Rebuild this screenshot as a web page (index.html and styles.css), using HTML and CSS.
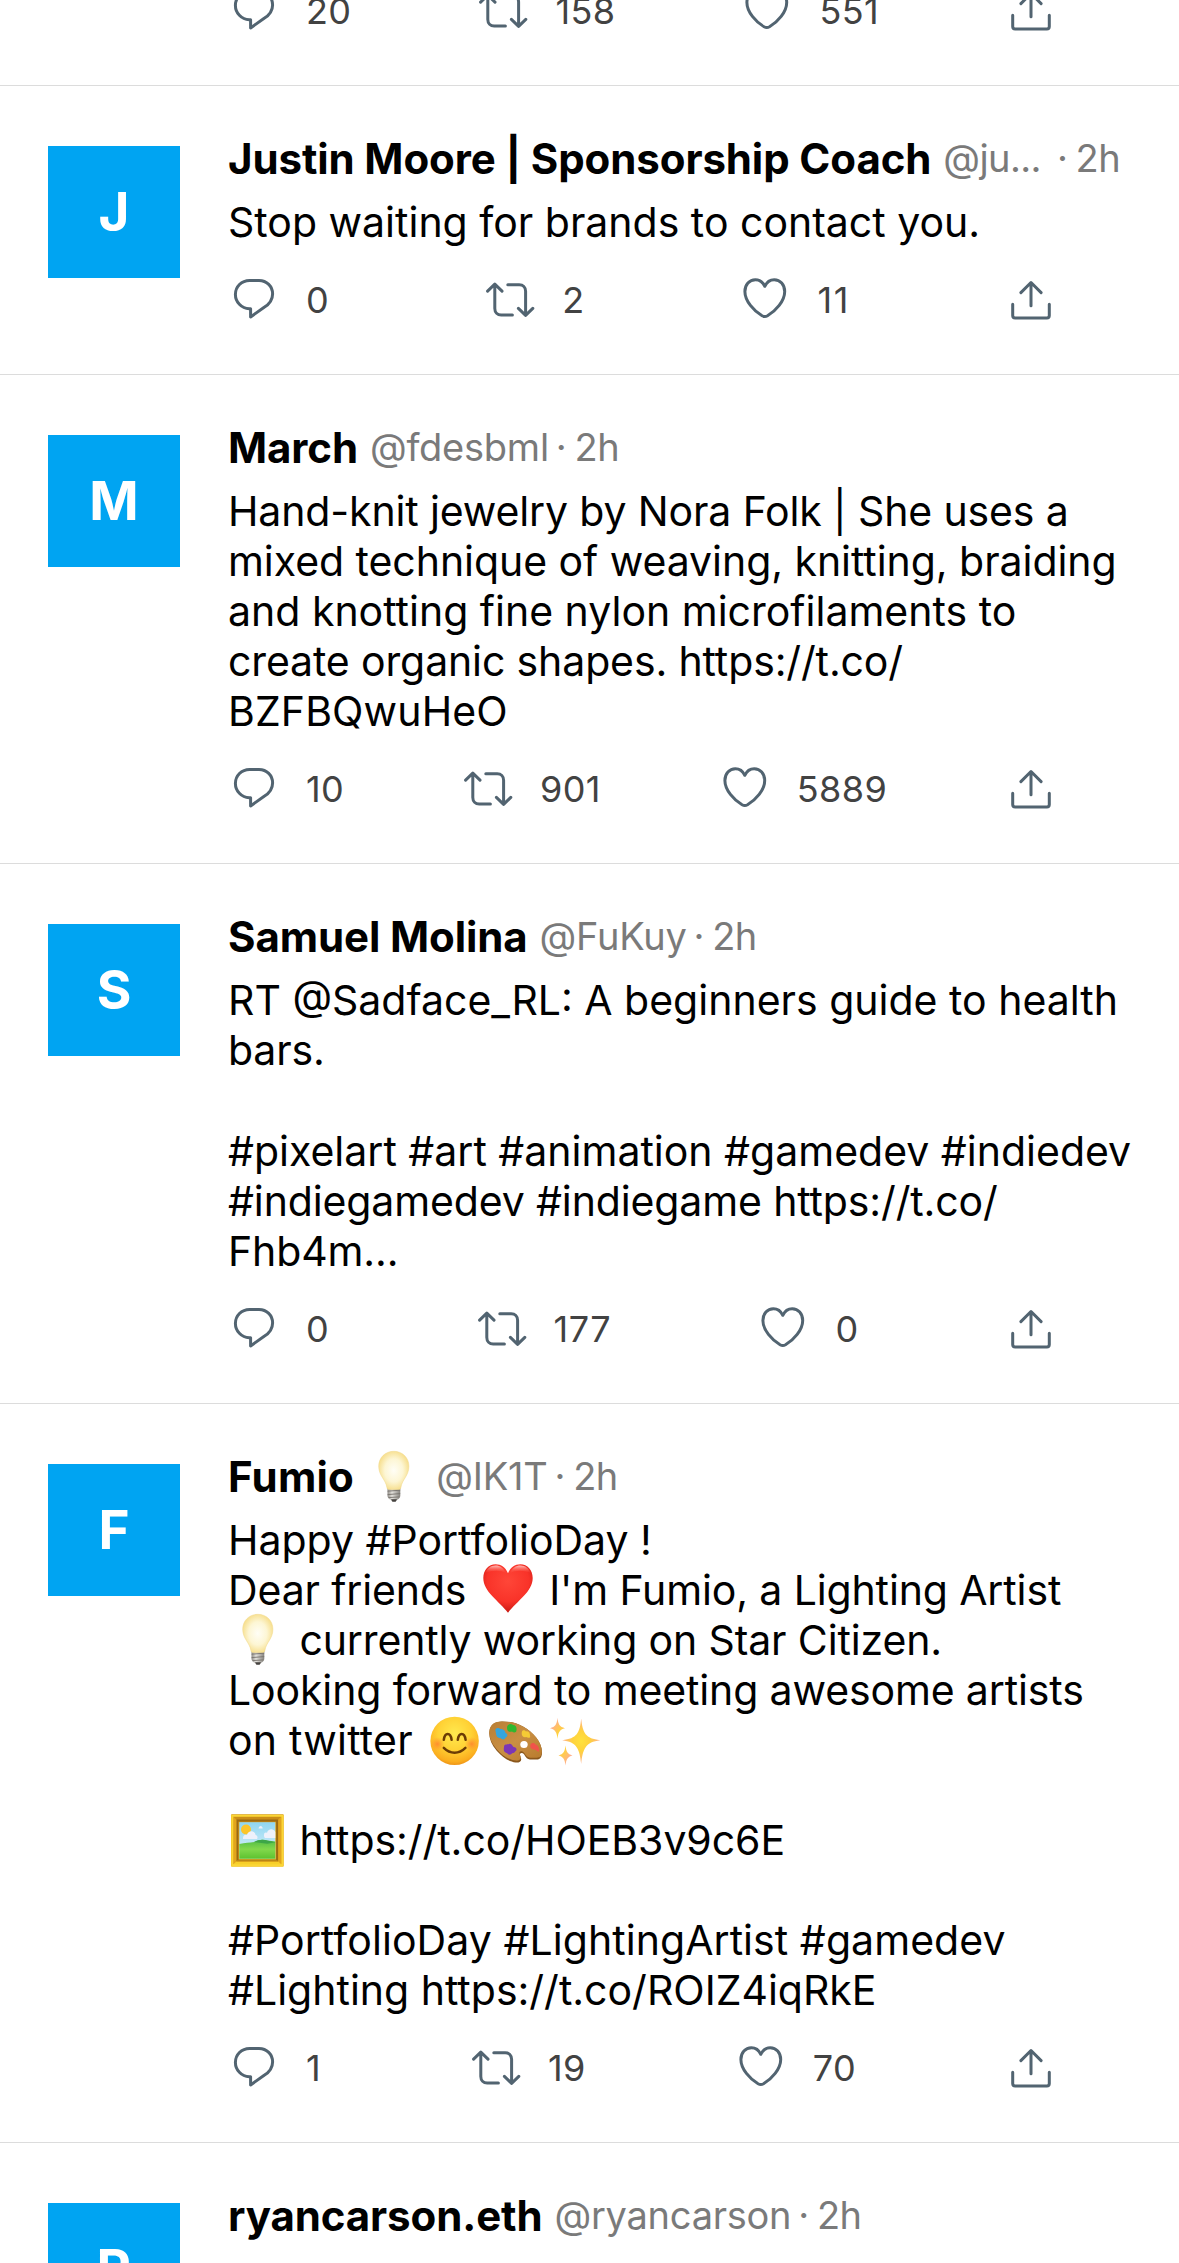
FILE: index.html
```
<!DOCTYPE html>
<html lang="en">
<head>
<meta charset="utf-8">
<title>Timeline</title>
<link rel="stylesheet" href="styles.css">
</head>
<body>
<svg class="sprite" aria-hidden="true">
  <defs>
    <radialGradient id="g-bulb" cx=".5" cy=".5" r=".55"><stop offset="0" stop-color="#fffef6"/><stop offset=".55" stop-color="#fdf6d4"/><stop offset="1" stop-color="#f6dc85"/></radialGradient>
    <linearGradient id="g-base" x1="0" x2="1" y1="0" y2="0"><stop offset="0" stop-color="#8d8a85"/><stop offset=".35" stop-color="#e4e2dd"/><stop offset="1" stop-color="#85827d"/></linearGradient>
    <radialGradient id="g-heart" cx=".5" cy=".35" r=".65"><stop offset="0" stop-color="#ff4638"/><stop offset=".65" stop-color="#f93329"/><stop offset="1" stop-color="#c81912"/></radialGradient>
    <linearGradient id="g-shine" x1="0" x2="0" y1="0" y2="1"><stop offset="0" stop-color="#ffd9d5" stop-opacity=".85"/><stop offset="1" stop-color="#ff5a4c" stop-opacity="0"/></linearGradient>
    <radialGradient id="g-face" cx=".5" cy=".35" r=".68"><stop offset="0" stop-color="#ffe94f"/><stop offset=".5" stop-color="#ffd235"/><stop offset=".85" stop-color="#fbae1f"/><stop offset="1" stop-color="#ea8a12"/></radialGradient>
    <radialGradient id="g-blush"><stop offset="0" stop-color="#ff7a2e" stop-opacity=".75"/><stop offset="1" stop-color="#ff8a2e" stop-opacity="0"/></radialGradient>
    <linearGradient id="g-wood" x1="0" x2="1" y1="0" y2="1"><stop offset="0" stop-color="#b97f35"/><stop offset=".5" stop-color="#c98f43"/><stop offset="1" stop-color="#b87a2c"/></linearGradient>
    <radialGradient id="g-spark"><stop offset="0" stop-color="#ffe23c"/><stop offset=".45" stop-color="#ffd23e"/><stop offset="1" stop-color="#ffb08a"/></radialGradient>
    <linearGradient id="g-sky" x1="0" x2="0" y1="0" y2="1"><stop offset="0" stop-color="#8fd6f2"/><stop offset="1" stop-color="#e4f4fa"/></linearGradient>
    <linearGradient id="g-hill" x1="0" x2="0" y1="0" y2="1"><stop offset="0" stop-color="#4fbb46"/><stop offset=".5" stop-color="#82d84c"/><stop offset="1" stop-color="#5cc22f"/></linearGradient>

    <symbol id="i-reply" viewBox="0 0 52 52"><path d="M21.6 6.4h9.4c7.8 0 13.6 6.2 13.6 13.500 0 5.500-3.100 10-8.400 13.400L22.600 42.900v-8.100h-1.300C13.400 34.400 7.400 27.900 7.400 20.400c0-7.800 6.100-14 14.200-14z"/></symbol>
    <symbol id="i-retweet" viewBox="0 0 52 52"><path d="M3.600 17.200l7.200-7 7.200 7M10.800 10.600v23.900c0 3.800 2.600 6.500 6.400 6.500h11.200M23.800 10.800H35.200c3.800 0 6.400 2.700 6.400 6.500V41.200M34.400 34.400l7.200 7 7.200-7"/></symbol>
    <symbol id="i-like" viewBox="0 0 52 52"><path d="M25.800 12.300C23.800 8 20.300 5.700 16.400 5.700 10.400 5.700 5.900 10.600 5.900 17.500c0 9.600 9 19.500 17.200 24.300 1.800 1 3.600 1 5.400 0C36.700 37 45.700 27.100 45.700 17.500c0-6.900-4.500-11.800-10.500-11.800-3.900 0-7.400 2.300-9.400 6.600z"/></symbol>
    <symbol id="i-share" viewBox="0 0 52 52"><path d="M26 31.800V9M15.900 18.600L26 8.500l10.100 10.100M7.700 30.300v11.200c0 1.500.9 2.400 2.400 2.400h31.800c1.500 0 2.400-.9 2.400-2.400V30.300"/></symbol>

    <symbol id="e-bulb" viewBox="0 0 60 60">
      <path d="M23.500 40h12.800v8.500c0 2.200-1.200 3.400-3 4.200l-1.400 1.600h-4l-1.400-1.600c-1.800-.8-3-2-3-4.200z" fill="url(#g-base)"/>
      <path d="M23.600 44.200l12.600-1M23.600 47.600l12.600-1M24.500 50.600l10.800-.7" stroke="#77736d" stroke-width=".9"/>
      <path d="M27 52.300h6l-1.400 2.400h-3.200z" fill="#45423f"/>
      <path d="M29.800 4.300c8.700 0 15.100 6.400 15.100 14.900 0 9.800-6.700 12.900-8 21.300-.2 1.400-1 2-2.300 2h-9.400c-1.300 0-2.100-.6-2.300-2-1.300-8.400-8.200-11.500-8.200-21.300 0-8.500 6.400-14.900 15.100-14.900z" fill="url(#g-bulb)" stroke="#f1d98c" stroke-width=".5"/>
    </symbol>
    <symbol id="e-heart" viewBox="0 0 60 60">
      <path d="M30 13.300C27.600 7.200 23 4.200 17.700 4.200 10.400 4.200 5.300 10.200 5.300 18c0 13.800 15.600 22.700 24.700 34.800C39.100 40.700 54.700 31.800 54.700 18c0-7.800-5.100-13.800-12.400-13.800-5.300 0-9.900 3-12.300 9.100z" fill="url(#g-heart)"/>
      <path d="M7.500 13c1.700-4.900 5.500-7.600 10-7.600 4.600 0 8.400 2.600 10.700 7.800-6-3.200-13-3.300-20.700-.2zM52.500 13c-1.700-4.900-5.500-7.600-10-7.600-4.600 0-8.400 2.600-10.700 7.800 6-3.200 13-3.300 20.700-.2z" fill="url(#g-shine)"/>
    </symbol>
    <symbol id="e-smile" viewBox="0 0 60 60">
      <circle cx="29.600" cy="29.900" r="24.200" fill="url(#g-face)"/>
      <circle cx="12.500" cy="33" r="7" fill="url(#g-blush)"/><circle cx="46.700" cy="33" r="7" fill="url(#g-blush)"/>
      <path d="M18.800 28.800c.5-3.900 1.900-5.800 3.900-5.800s3.400 1.900 3.900 5.800M32.800 28.800c.5-3.900 1.900-5.800 3.900-5.800s3.400 1.900 3.900 5.800" fill="none" stroke="#6b3c05" stroke-width="2.500" stroke-linecap="round"/>
      <path d="M18.800 36.900c6.400 6.400 15.200 6.400 21.600 0" fill="none" stroke="#6b3c05" stroke-width="2.500" stroke-linecap="round"/>
    </symbol>
    <symbol id="e-palette" viewBox="0 0 60 60">
      <path d="M4.300 21.500C5 14 9.500 10.500 17 10.500c8 0 14.500 1.500 21 5C48 21 57 31 57 41.500c0 5-2 7.200-5.500 7-3.500-.2-5.500.6-8.700-.8-2.800-1.200-3.300-6-6.300-5.700-2.500.3-1.300 3-.5 5.200 1 3-1.500 4.700-5.500 4.300C24 50.800 17 46 11.500 39.500 6.500 33.500 4 27 4.300 21.500z" fill="#8a571c"/>
      <path fill-rule="evenodd" d="M4.300 20.500C5 13.300 9.500 10.500 17 10.500c8 0 14.500 1.500 21 5C48 21 56.800 30.500 56.800 40.500c0 4.500-2 6.400-5.500 6.200-3.500-.2-5.500.4-8.500-.8-2.800-1.200-3.600-5.900-6.600-5.600-2.700.3-1.500 3-.7 5 .8 2.700-1 4.700-5 4.300C24 49 17 44.500 11.500 38 6.500 32 4 26 4.300 20.500z" fill="url(#g-wood)"/>
      <ellipse cx="39" cy="33.500" rx="3.700" ry="3.500" fill="#fff"/>
      <path d="M10.500 20c-1-3 3-4 5-2 3 0 5 2 5 4 3 1 2 4 0 4.500-1 3-4 2-5 .5-4 0-4-2-5-7z" fill="#35a5dd"/>
      <path d="M22 17c0-4 4-5 6-3 3 0 4 3 3.500 5 0 3-3 3-4.500 1.500-3 1-5-.5-5-3.500z" fill="#2fb82f"/>
      <path d="M37 20.500c1-2 3-1 4 0 3-1 4 2 4 4 1 3-2 2.500-4 1.500-3 1-5-2-4-5.500z" fill="#f5cb35"/>
      <path d="M45.500 33.500c1-2 4-2 5 0 3 1 4 4 3.500 7-2 .5-3-2-4.500-2-3 0-5-2-4-5z" fill="#f0534a"/>
      <path d="M19 36c0-3 3-2.500 5-3 3-1 3 2 4.500 3 3 0 4 3 2 4-1 2.500-3 1.500-4 3-3 2-4-1-5-1-3-1-3-3-2.500-6z" fill="#7c36b5"/>
    </symbol>
    <symbol id="e-sparkles" viewBox="0 0 60 60">
      <path d="M36.200 7.500c1.400 14.500 4.300 20 19 21.700C40.500 31 37.600 38 36.200 52.900 34.800 38 31.900 31 17.200 29.200 31.900 27.500 34.800 22 36.200 7.500z" fill="url(#g-spark)"/>
      <path d="M12.500 6.800c.7 6.500 2 9.100 7.500 10.400-5.500 1.300-6.800 4.200-7.500 10.700C11.800 21.400 10.500 18.500 5 17.200c5.500-1.300 6.800-3.900 7.500-10.400zM20.500 34.600c.7 6 2 8.600 7 9.900-5 1.300-6.300 4-7 10-.7-6-2-8.700-7-10 5-1.300 6.300-3.900 7-9.900z" fill="url(#g-spark)"/>
    </symbol>
    <symbol id="e-frame" viewBox="0 0 60 60">
      <rect x="3" y="3.500" width="52.700" height="52" rx="1" fill="#e2a51c"/>
      <path d="M3 55.500l8.300-7.700h36l8.400 7.700z" fill="#f7cf2a"/><path d="M3 3.500h52.700l-8.400 7.700h-36z" fill="#c98d18"/>
      <path d="M4.200 4.700h50.300v49.600H4.200z" fill="none" stroke="#fbd636" stroke-width="2"/>
      <path d="M9.500 9.500h39.600v40H9.500z" fill="none" stroke="#9b6a12" stroke-width="2"/>
      <path d="M9 50.200h40.600" stroke="#d9a01b" stroke-width="1.500"/>
      <rect x="11.300" y="11.200" width="36" height="36.600" fill="url(#g-sky)"/>
      <circle cx="18" cy="18.500" r="5" fill="#fbc52b"/>
      <path d="M15 27c0-3 2.500-4 4-3 1-5 8-5 8.500 0 2 .5 2.500 2.500 1.500 4H15zM36 24c0-2.500 2-3 3-2 1-5 7-4.500 8.300-1v6H37c-1-.8-1-2-1-3zM30.500 17.500c1-3.500 4-3 4.200 0z" fill="#eef1fb"/>
      <path d="M11.300 33c6-1.500 10-1 15-2 5-2.800 9-2.800 13-1.500l8 1v17.300h-36z" fill="url(#g-hill)"/>
      <path d="M26 31c5-3 10-2.800 14-1.200l7.300 1.500-8 1.500z" fill="#3da648"/>
    </symbol>
  </defs>
</svg>

<main class="feed">
  <article class="tweet tweet--top">
    <div class="main">
      <footer class="actions">
        <span class="action"><svg class="icon"><use href="#i-reply"/></svg>20</span>
        <span class="action"><svg class="icon"><use href="#i-retweet"/></svg>158</span>
        <span class="action"><svg class="icon"><use href="#i-like"/></svg>551</span>
        <span class="action"><svg class="icon"><use href="#i-share"/></svg></span>
      </footer>
    </div>
  </article>

  <article class="tweet">
    <div class="avatar">J</div>
    <div class="main">
      <header class="head"><b class="name">Justin Moore | Sponsorship Coach</b><span class="handle handle--cut">@ju...</span><span class="time">· 2h</span></header>
      <p class="text"><span>Stop waiting for brands to contact you.</span></p>
      <footer class="actions">
        <span class="action"><svg class="icon"><use href="#i-reply"/></svg>0</span>
        <span class="action"><svg class="icon"><use href="#i-retweet"/></svg>2</span>
        <span class="action action--ones"><svg class="icon"><use href="#i-like"/></svg>11</span>
        <span class="action"><svg class="icon"><use href="#i-share"/></svg></span>
      </footer>
    </div>
  </article>

  <article class="tweet">
    <div class="avatar">M</div>
    <div class="main">
      <header class="head"><b class="name">March</b><span class="handle">@fdesbml</span><span class="time">· 2h</span></header>
      <p class="text">
        <span class="tight">Hand-knit jewelry by Nora Folk | She uses a</span>
        <span class="snug">mixed technique of weaving, knitting, braiding</span>
        <span>and knotting fine nylon microfilaments to</span>
        <span class="tight">create organic shapes. https://t.co/</span>
        <span class="loose">BZFBQwuHeO</span>
      </p>
      <footer class="actions">
        <span class="action"><svg class="icon"><use href="#i-reply"/></svg>10</span>
        <span class="action"><svg class="icon"><use href="#i-retweet"/></svg>901</span>
        <span class="action"><svg class="icon"><use href="#i-like"/></svg>5889</span>
        <span class="action"><svg class="icon"><use href="#i-share"/></svg></span>
      </footer>
    </div>
  </article>

  <article class="tweet">
    <div class="avatar">S</div>
    <div class="main">
      <header class="head"><b class="name">Samuel Molina</b><span class="handle">@FuKuy</span><span class="time">· 2h</span></header>
      <p class="text">
        <span>RT @Sadface_RL: A beginners guide to health</span>
        <span class="tight">bars.</span>
        <span>&nbsp;</span>
        <span>#pixelart #art #animation #gamedev #indiedev</span>
        <span class="tight">#indiegamedev #indiegame https://t.co/</span>
        <span class="tight">Fhb4m...</span>
      </p>
      <footer class="actions">
        <span class="action"><svg class="icon"><use href="#i-reply"/></svg>0</span>
        <span class="action"><svg class="icon"><use href="#i-retweet"/></svg>177</span>
        <span class="action"><svg class="icon"><use href="#i-like"/></svg>0</span>
        <span class="action"><svg class="icon"><use href="#i-share"/></svg></span>
      </footer>
    </div>
  </article>

  <article class="tweet">
    <div class="avatar">F</div>
    <div class="main">
      <header class="head"><b class="name name--emoji">Fumio <svg class="emoji"><use href="#e-bulb"/></svg></b><span class="handle">@IK1T</span><span class="time">· 2h</span></header>
      <p class="text">
        <span>Happy #PortfolioDay !</span>
        <span class="tight">Dear friends <svg class="emoji"><use href="#e-heart"/></svg> I'm Fumio, a Lighting Artist</span>
        <span class="tight"><svg class="emoji"><use href="#e-bulb"/></svg> currently working on Star Citizen.</span>
        <span class="tight">Looking forward to meeting awesome artists</span>
        <span class="wide">on twitter <svg class="emoji"><use href="#e-smile"/></svg><svg class="emoji"><use href="#e-palette"/></svg><svg class="emoji"><use href="#e-sparkles"/></svg></span>
        <span>&nbsp;</span>
        <span class="snug"><svg class="emoji"><use href="#e-frame"/></svg> https://t.co/HOEB3v9c6E</span>
        <span>&nbsp;</span>
        <span class="even">#PortfolioDay #LightingArtist #gamedev</span>
        <span>#Lighting https://t.co/ROIZ4iqRkE</span>
      </p>
      <footer class="actions">
        <span class="action"><svg class="icon"><use href="#i-reply"/></svg>1</span>
        <span class="action"><svg class="icon"><use href="#i-retweet"/></svg>19</span>
        <span class="action"><svg class="icon"><use href="#i-like"/></svg>70</span>
        <span class="action"><svg class="icon"><use href="#i-share"/></svg></span>
      </footer>
    </div>
  </article>

  <article class="tweet">
    <div class="avatar">R</div>
    <div class="main">
      <header class="head"><b class="name">ryancarson.eth</b><span class="handle">@ryancarson</span><span class="time">· 2h</span></header>
    </div>
  </article>
</main>
</body>
</html>
```
FILE: styles.css
```
* { box-sizing: border-box; }

body {
  margin: 0;
  height: 2263px;
  overflow: hidden;
  background: #fff;
  color: #000;
  font-family: Inter, "Liberation Sans", sans-serif;
}

.sprite { display: block; width: 0; height: 0; }

.feed { height: 2263px; overflow: hidden; }

.tweet {
  display: flex;
  gap: 48px;
  padding: 48px;
  border-bottom: 1px solid #dcdcdc;
}

.tweet--top {
  height: 86px;
  padding-top: 0;
  align-items: flex-end;
  justify-content: flex-end;
}

.tweet--top .main { flex: 0 0 903px; }

.avatar {
  display: flex;
  flex: 0 0 132px;
  align-items: center;
  justify-content: center;
  height: 132px;
  margin-top: 12px;
  background: #00a4f2;
  color: #fff;
  font-size: 53px;
  font-weight: 650;
}

.main { flex: 1; min-width: 0; }

.head {
  display: flex;
  align-items: baseline;
  height: 50px;
  line-height: 50px;
  white-space: nowrap;
}

.name {
  font-size: 42px;
  font-weight: 700;
  letter-spacing: -0.1px;
}

.name--emoji { letter-spacing: 0.25px; }

.handle,
.time {
  position: relative;
  top: -2px;
  color: #7a7a7a;
  font-size: 38px;
}

.handle { margin-left: 12px; letter-spacing: -0.25px; }
.handle--cut { margin-right: 9px; letter-spacing: -0.6px; }
.time { margin-left: 7px; letter-spacing: -0.5px; word-spacing: -2px; }

.text {
  margin: 13px 0 27px;
  font-size: 41px;
  line-height: 50.06px;
  white-space: nowrap;
}

.text > span { display: block; }
.tight { letter-spacing: -0.13px; }
.snug { letter-spacing: -0.05px; }
.even { letter-spacing: 0.06px; }
.loose { letter-spacing: 0.12px; }
.wide { letter-spacing: 0.22px; }

.emoji {
  width: 60px;
  height: 60px;
  margin: -10px 0;
  vertical-align: -5.5px;
}

.actions {
  display: flex;
  justify-content: space-between;
  width: 829px;
  height: 52px;
}

.action {
  display: flex;
  gap: 26px;
  align-items: center;
  color: #424242;
  font-size: 36px;
  letter-spacing: 0.4px;
}

.action--ones { letter-spacing: 1.6px; }

.icon {
  width: 52px;
  height: 52px;
  fill: none;
  stroke: #526471;
  stroke-width: 3;
  stroke-linecap: round;
  stroke-linejoin: round;
}
```
